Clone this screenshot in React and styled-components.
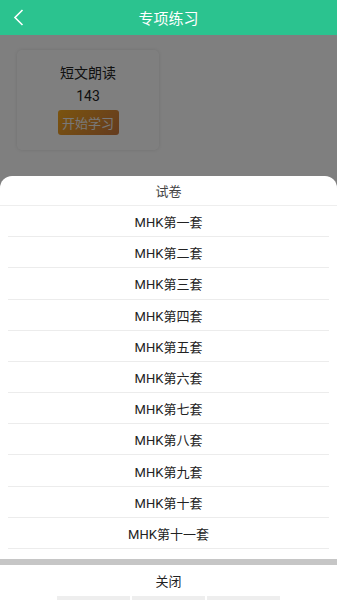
import React from 'react'
import styled, { createGlobalStyle } from 'styled-components'

const papers = [
  'MHK第一套', 'MHK第二套', 'MHK第三套', 'MHK第四套', 'MHK第五套', 'MHK第六套',
  'MHK第七套', 'MHK第八套', 'MHK第九套', 'MHK第十套', 'MHK第十一套',
]

function App() {
  return (
    <Page>
      <GlobalStyle />
      <Header>
        <Back>
          <svg width="12" height="17" viewBox="0 0 12 17">
            <path d="M9.5 1 L2 8.5 L9.5 16" fill="none" stroke="#fff" strokeWidth="1.6" />
          </svg>
        </Back>
        <Title>专项练习</Title>
      </Header>
      <Content>
        <Card>
          <CardName>短文朗读</CardName>
          <CardCount>143</CardCount>
          <StartButton>开始学习</StartButton>
        </Card>
      </Content>

      <Overlay />
      <Sheet>
        <SheetTitle>试卷</SheetTitle>
        <List>
          {papers.map(p => (
            <Item key={p}>{p}</Item>
          ))}
        </List>
        <Divider />
        <Close>关闭</Close>
        <Peek>
          <PeekBar />
          <PeekBar />
          <PeekBar />
        </Peek>
      </Sheet>
    </Page>
  )
}

const GlobalStyle = createGlobalStyle`
  html, body {
    margin: 0;
    padding: 0;
    background: #fff;
    font-family: Roboto, "Noto Sans CJK SC", sans-serif;
  }
  * { box-sizing: border-box; }
`

const Page = styled.div`
  width: 337px;
  height: 600px;
  overflow: hidden;
  position: relative;
  background: #fff;
`

const Header = styled.div`
  height: 35px;
  background: #2bc38f;
  display: flex;
  align-items: center;
  justify-content: center;
  position: relative;
`

const Back = styled.div`
  position: absolute;
  left: 13px;
  top: 9px;
  display: flex;
`

const Title = styled.div`
  color: #fff;
  font-size: 15px;
`

const Content = styled.div`
  padding: 15px 17px;
`

const Card = styled.div`
  width: 142px;
  height: 100px;
  border-radius: 5px;
  background: #fff;
  box-shadow: 0 0 4px rgba(0, 0, 0, 0.12);
  display: flex;
  flex-direction: column;
  align-items: center;
  padding-top: 13px;
`

const CardName = styled.div`
  font-size: 14px;
  color: #222;
  line-height: 20px;
`

const CardCount = styled.div`
  font-size: 14px;
  color: #222;
  line-height: 20px;
  margin-top: 3px;
`

const StartButton = styled.div`
  margin-top: 4px;
  width: 61px;
  height: 25px;
  border-radius: 3px;
  background: linear-gradient(135deg, #f6a81e, #c9773e);
  color: #f0f0f0;
  font-size: 13px;
  display: flex;
  align-items: center;
  justify-content: center;
`

const Overlay = styled.div`
  position: absolute;
  inset: 35px 0 0 0;
  background: rgba(0, 0, 0, 0.5);
`

const Sheet = styled.div`
  position: absolute;
  left: 0;
  right: 0;
  top: 176px;
  bottom: 0;
  background: #fff;
  border-radius: 12px 12px 0 0;
  display: flex;
  flex-direction: column;
`

const SheetTitle = styled.div`
  height: 30px;
  border-bottom: 1px solid #eee;
  display: flex;
  align-items: center;
  justify-content: center;
  font-size: 13px;
  color: #444;
`

const List = styled.div`
  padding: 0 8px 10px;
`

const Item = styled.div`
  height: 31.2px;
  border-bottom: 1px solid #ececec;
  display: flex;
  align-items: center;
  justify-content: center;
  padding-top: 1px;
  font-size: 13px;
  color: #222;
`

const Divider = styled.div`
  height: 6px;
  background: #c6c6c6;
`

const Close = styled.div`
  height: 31px;
  display: flex;
  align-items: center;
  justify-content: center;
  font-size: 13px;
  color: #222;
`

const Peek = styled.div`
  display: flex;
  justify-content: center;
  gap: 2px;
`

const PeekBar = styled.div`
  width: 73px;
  height: 4px;
  background: #eeeeee;
`

export default App
